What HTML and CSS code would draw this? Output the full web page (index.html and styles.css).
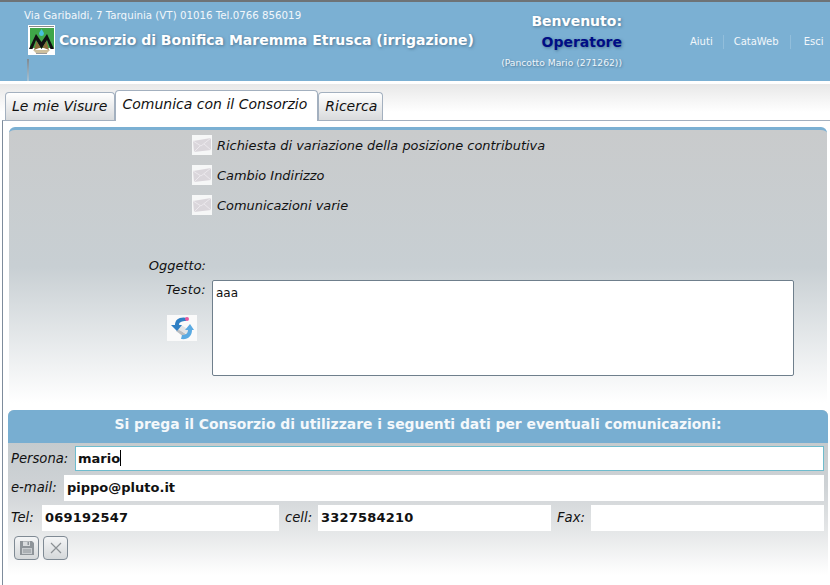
FILE: index.html
```html
<!DOCTYPE html>
<html lang="it">
<head>
<meta charset="utf-8">
<title>Consorzio di Bonifica Maremma Etrusca</title>
<link rel="stylesheet" href="styles.css">
</head>
<body>
<header class="top">
  <div class="brand">
    <div class="address">Via Garibaldi, 7 Tarquinia (VT) 01016 Tel.0766 856019</div>
    <div class="brand-row">
      <svg class="logo" viewBox="0 0 27 30" width="27" height="30">
        <rect width="27" height="30" fill="#fff"/>
        <rect x="1" y="1" width="25" height="1" fill="#8a8a8a"/>
        <rect x="2" y="3" width="24" height="20" fill="#3fa648"/>
        <path d="M13.500 4c1.800 2.600 2.400 3.600 2.400 4.700a2.400 2.400 0 0 1-4.800 0c0-1.100.6-2.100 2.400-4.700z" fill="#49c0dc"/>
        <path d="M1 24 8 9l5.500 8L19 9l7 15h-3.500L19 15l-5.500 9L8 15l-3.500 9z" fill="#111"/>
        <path d="M6 25 8.500 16l4 6.500zm15 0L18.500 16l-4 6.500z" fill="#8b6d3c"/>
        <path d="M5 25h17l-3 3H8z" fill="#cdbf9d"/>
        <rect x="8" y="28" width="11" height="1" fill="#9a9a9a"/>
      </svg>
      <div class="title">Consorzio di Bonifica Maremma Etrusca (irrigazione)</div>
    </div>
    <div class="brand-rule"></div>
  </div>
  <div class="welcome">
    <div class="welcome-a">Benvenuto:</div>
    <div class="welcome-b">Operatore</div>
    <div class="welcome-c">(Pancotto Mario (271262))</div>
  </div>
  <nav class="links">
    <a class="link">Aiuti</a>
    <a class="link">CataWeb</a>
    <a class="link link-last">Esci</a>
  </nav>
</header>

<div class="tabs">
  <div class="tab tab-first">Le mie Visure</div>
  <div class="tab tab-active">Comunica con il Consorzio</div>
  <div class="tab tab-third">Ricerca</div>
</div>

<main class="sheet">
  <section class="panel-top">
    <ul class="topics">
      <li class="topic">
        <svg class="mail" viewBox="0 0 20 20" width="20" height="20"><rect width="20" height="20" fill="#f6f7f7"/><path d="M1 6 19 3v12L2 17z" fill="#dad6db"/><path d="M1 6l8 5 10-8M2 17l6-6M19 15l-7-6" fill="none" stroke="#ece9ed"/></svg>
        <span>Richiesta di variazione della posizione contributiva</span>
      </li>
      <li class="topic">
        <svg class="mail" viewBox="0 0 20 20" width="20" height="20"><rect width="20" height="20" fill="#f6f7f7"/><path d="M1 6 19 3v12L2 17z" fill="#dad6db"/><path d="M1 6l8 5 10-8M2 17l6-6M19 15l-7-6" fill="none" stroke="#ece9ed"/></svg>
        <span>Cambio Indirizzo</span>
      </li>
      <li class="topic">
        <svg class="mail" viewBox="0 0 20 20" width="20" height="20"><rect width="20" height="20" fill="#f6f7f7"/><path d="M1 6 19 3v12L2 17z" fill="#dad6db"/><path d="M1 6l8 5 10-8M2 17l6-6M19 15l-7-6" fill="none" stroke="#ece9ed"/></svg>
        <span>Comunicazioni varie</span>
      </li>
    </ul>
    <div class="subject">Oggetto:</div>
    <div class="message">
      <div class="message-side">
        <div class="message-label">Testo:</div>
        <svg class="sync" viewBox="0 0 30 26" width="30" height="26">
          <rect width="30" height="26" fill="#fafafa"/>
          <path d="M9 16l8 6 3-2-8-6z" fill="#b9bdc1"/>
          <path d="M12 9l9 5v6l-9-5z" fill="#e2e4e6"/>
          <path d="M21 3C13 1 8 4 8 10H4l6 6 5-6h-3c0-3 3-4 7-4z" fill="#2f7fc4"/>
          <path d="M14 24c7 1 11-3 11-9h2l-4-6-5 6h3c0 3-2 5-6 5z" fill="#5aaae2"/>
          <circle cx="20" cy="4" r="2" fill="#e85aa0"/>
        </svg>
      </div>
      <div class="textbox">aaa</div>
    </div>
  </section>

  <section class="panel-form">
    <h2 class="form-head">Si prega il Consorzio di utilizzare i seguenti dati per eventuali comunicazioni:</h2>
    <div class="form-row row-persona">
      <span class="lbl lbl-persona">Persona:</span>
      <div class="field field-focus">mario<i class="caret"></i></div>
    </div>
    <div class="form-row row-email">
      <span class="lbl lbl-email">e-mail:</span>
      <div class="field field-email">pippo@pluto.it</div>
    </div>
    <div class="form-row row-phones">
      <span class="lbl lbl-tel">Tel:</span>
      <div class="field field-tel">069192547</div>
      <span class="lbl lbl-cell">cell:</span>
      <div class="field field-cell">3327584210</div>
      <span class="lbl lbl-fax">Fax:</span>
      <div class="field field-fax"></div>
    </div>
    <div class="actions">
      <button class="btn" type="button" aria-label="Salva">
        <svg viewBox="0 0 14 14" width="14" height="14"><path d="M0 0h12l2 2v12H0z" fill="#8e9499"/><rect x="3" y="0.500" width="7" height="4.500" fill="#d9dcde"/><rect x="7.500" y="1" width="1.500" height="3" fill="#8e9499"/><rect x="2" y="7" width="10" height="6" fill="#c9cdd0"/><path d="M3 9h8M3 11h8" stroke="#8e9499"/></svg>
      </button>
      <button class="btn" type="button" aria-label="Annulla">
        <svg viewBox="0 0 14 14" width="14" height="14"><path d="M2 2l10 10M12 2 2 12" stroke="#8b9094" stroke-width="1.200" fill="none"/></svg>
      </button>
    </div>
  </section>
</main>
</body>
</html>
```
FILE: styles.css
```css
* { box-sizing: border-box; }
html, body { margin: 0; padding: 0; height: 100%; }
body {
  width: 830px;
  height: 585px;
  overflow: hidden;
  font-family: "DejaVu Sans", Verdana, sans-serif;
  background: linear-gradient(#e8e8e8 84px, #fff 112px);
  color: #111;
}

/* header */
.top {
  height: 81px;
  background: #7bb0d3;
  border-top: 2px solid #6e7376;
  display: flex;
  color: #fff;
  box-shadow: 0 3px 0 #fff;
}
.brand { flex: none; width: 500px; padding: 7px 0 0 24px; }
.address { font-size: 10.250px; line-height: 13px; color: #f2f7fb; white-space: nowrap; }
.brand-row { display: flex; align-items: center; gap: 4px; margin: 3px 0 0 4px; height: 30px; }
.logo { flex: none; }
.title {
  font-size: 14px;
  font-weight: bold;
  white-space: nowrap;
  text-shadow: 1px 1px 3px rgba(40, 70, 95, .55);
}
.brand-rule {
  width: 2px;
  height: 22px;
  margin: 4px 0 0 3px;
  background: linear-gradient(#7f8a92, #a4c2d6);
}
.welcome { flex: none; width: 122px; text-align: right; padding-top: 9px; }
.welcome-a, .welcome-b {
  font-size: 14px;
  font-weight: bold;
  line-height: 21px;
  text-shadow: 1px 1px 3px rgba(40, 70, 95, .55);
}
.welcome-b { color: #000d85; }
.welcome-c { font-size: 9.200px; line-height: 20px; color: #eef5fa; text-shadow: 1px 1px 2px rgba(40, 70, 95, .5); white-space: nowrap; }
.links { flex: none; display: flex; margin-left: 58px; padding-top: 33px; height: 49px; }
.link {
  font-size: 10px;
  line-height: 14px;
  height: 14px;
  padding: 0 10px;
  color: #f2f7fb;
  border-left: 1px solid #92bedb;
}
.link:first-child { border-left: 0; }
.link-last { padding-left: 13px; margin-left: 1px; padding-right: 0; }

/* tabs */
.tabs { display: flex; align-items: flex-end; height: 36px; padding: 6px 0 0 5px; margin-top: 3px; }
.tab {
  height: 28px;
  font-size: 14px;
  font-style: italic;
  line-height: 27px;
  color: #111;
  background: linear-gradient(#fff, #d8dadc);
  border: 1px solid #a3b0bf;
  border-bottom: 0;
  border-radius: 4px 4px 0 0;
  white-space: nowrap;
  position: relative;
}
.tab-first { padding: 0 7px 0 6px; }
.tab-third { padding: 0 5px 0 6px; }
.tab-active {
  height: 31px;
  padding: 0 10px 0 6px;
  background: #fff;
  line-height: 27px;
  z-index: 1;
  margin-bottom: -1px;
}

/* sheet */
.sheet {
  margin-left: 2px;
  height: 465px;
  border-top: 1px solid #a3b0bf;
  border-left: 1px solid #7e8c9c;
  padding: 6px 2px 0 5px;
}
.panel-top {
  height: 276px;
  margin: 0 1px;
  border-top: 3px solid #7bb0d3;
  border-radius: 6px 6px 0 0;
  background: linear-gradient(#c9cbcc, #c8cfd3 50%, #fff 100%);
}
.topics { list-style: none; margin: 0; padding: 0 0 0 183px; }
.topic { display: flex; align-items: center; gap: 5px; height: 30px; font-size: 12.930px; font-style: italic; }
.mail { flex: none; }
.subject { width: 197px; margin-top: 36px; text-align: right; font-size: 13px; font-style: italic; line-height: 20px; }
.message { display: flex; margin-top: 4px; }
.message-side { width: 197px; display: flex; flex-direction: column; align-items: flex-end; }
.message-label { font-size: 13px; font-style: italic; line-height: 20px; letter-spacing: .3px; }
.sync { margin: 15px 9px 0 0; }
.textbox {
  width: 582px;
  height: 96px;
  margin-left: 6px;
  padding: 4px 3px;
  background: #fff;
  border: 1px solid #6f7f8c;
  border-radius: 2px;
  font-size: 12px;
  line-height: 16px;
}

.panel-form {
  margin-top: 7px;
  height: 165px;
  border-radius: 6px 6px 0 0;
  background: linear-gradient(#c5cbce 33px, #ced2d5 75px, #e4e6e7 120px, #fff 165px);
}
.form-head {
  margin: 0;
  height: 33px;
  background: #78aed1;
  border-radius: 6px 6px 0 0;
  color: #f4f8fb;
  font-size: 13.900px;
  font-weight: bold;
  line-height: 29px;
  text-align: center;
}
.form-row { display: flex; align-items: stretch; padding-left: 3px; padding-right: 4px; }
.row-persona { height: 25px; margin-top: 3px; }
.row-email { height: 26px; margin-top: 4px; }
.row-phones { height: 26px; margin-top: 4px; }
.lbl { font-size: 13.200px; font-style: italic; line-height: 26px; white-space: nowrap; flex: none; }
.lbl-persona { width: 64px; line-height: 25px; }
.lbl-email { width: 53px; }
.lbl-tel { width: 31px; }
.lbl-cell { width: 39px; padding-left: 6px; }
.lbl-fax { width: 40px; padding-left: 6px; }
.field {
  flex: 1;
  min-width: 0;
  background: #fff;
  padding-left: 3px;
  font-size: 13px;
  font-weight: bold;
  line-height: 24px;
  white-space: nowrap;
}
.field-email { line-height: 26px; }
.field-focus { border: 1px solid #6fbccd; padding-left: 2px; line-height: 23px; }
.field-tel { flex: none; width: 237px; letter-spacing: .2px; line-height: 25px; }
.field-cell { flex: none; width: 233px; letter-spacing: .2px; line-height: 25px; }
.field-fax { flex: none; width: 233px; }
.caret { display: inline-block; width: 1px; height: 16px; background: #000; vertical-align: -3px; }
.actions { display: flex; gap: 4px; padding: 5px 0 0 6px; }
.btn {
  width: 25px;
  height: 24px;
  padding: 0;
  display: flex;
  align-items: center;
  justify-content: center;
  background: linear-gradient(#f4f5f6, #d5d8da);
  border: 1px solid #7f8a94;
  border-radius: 4px;
}
```
